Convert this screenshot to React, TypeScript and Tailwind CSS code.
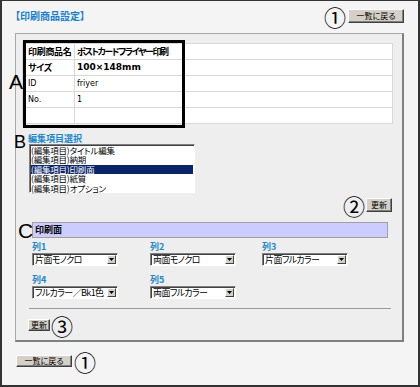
import React from "react";

const JP = "font-['Noto_Sans_CJK_JP',sans-serif] [font-feature-settings:'palt']";

function Btn({ label, className }: { label: string; className: string }) {
  return (
    <div
      className={`flex items-center justify-center bg-[#d4d0c8] border border-t-white border-l-white border-r-[#404040] border-b-[#404040] shadow-[inset_-1px_-1px_0_#808080] text-[8px] leading-none text-black whitespace-nowrap ${className}`}
    >
      {label}
    </div>
  );
}

function Circ({ n }: { n: string }) {
  return (
    <span className="inline-flex items-center h-[12px] text-[22px] leading-none text-black font-['Noto_Sans_CJK_JP',sans-serif]">
      {n}
    </span>
  );
}

function Sel({ text }: { text: string }) {
  return (
    <div className="flex items-center w-[86px] h-[13px] bg-white border border-t-[#808080] border-l-[#808080] border-r-white border-b-white shadow-[inset_1px_1px_0_#404040]">
      <span className="flex-1 min-w-0 pl-[2px] text-[9px] leading-[11px] tracking-[-0.6px] whitespace-nowrap text-black">{text}</span>
      <div className="w-[9px] h-[9px] mr-[1px] shrink-0 bg-[#d4d0c8] border border-t-white border-l-white border-r-[#404040] border-b-[#404040] flex items-center justify-center">
        <svg width="5" height="3" viewBox="0 0 5 3">
          <path d="M0 0h5L2.5 3z" fill="#000" />
        </svg>
      </div>
    </div>
  );
}

function Field({ label, text }: { label: string; text: string }) {
  return (
    <div className="flex flex-col">
      <div className="h-[11px] leading-[11px] text-[9px] font-bold text-[#1a86cc]">{label}</div>
      <div className="mt-[1px]">
        <Sel text={text} />
      </div>
    </div>
  );
}

const rows: { k: string; v: string; kb?: boolean; vb?: boolean; latin?: boolean; num?: boolean }[] = [
  { k: "印刷商品名", v: "ポストカードフライヤー印刷", kb: true, vb: true },
  { k: "サイズ", v: "100×148mm", kb: true, num: true },
  { k: "ID", v: "friyer", latin: true },
  { k: "No.", v: "1", latin: true },
  { k: "", v: "" },
];

export default function App() {
  return (
    <div
      className={`relative w-[420px] h-[387px] overflow-hidden bg-[#f4f4f4] border-[#333333] border-t border-l-2 border-r-2 border-b-2 ${JP}`}
    >
      {/* header */}
      <div className="h-[22px] flex items-center justify-between pt-[8px] pl-[13px] pr-[14px]">
        <div className="h-[14px] leading-[14px] text-[10px] font-bold text-[#1a7fcf]">【印刷商品設定】</div>
        <div className="flex items-center gap-[2px]">
          <Circ n="①" />
          <Btn label="一覧に戻る" className="w-[56px] h-[14px]" />
        </div>
      </div>

      {/* panel */}
      <div className="mt-[10px] ml-[13px] w-[389px] h-[309px] flex flex-col bg-[#eeeeee] border-t border-l border-[#a8a8a8] border-r-2 border-b-2 border-r-[#808080] border-b-[#808080]">
        {/* info table */}
        <div className="relative mt-[9px] ml-[6px] mr-[9px]">
          <div className="flex flex-col gap-[1px] bg-[#d8d8d8] border border-[#d8d8d8]">
            {rows.map((r, i) => (
              <div key={i} className="grid grid-cols-[51px_1fr] gap-[1px]">
                <div
                  className={`h-[15px] bg-white pl-[5px] flex items-center whitespace-nowrap text-black ${
                    r.latin ? "font-['DejaVu_Sans',sans-serif] text-[8px]" : "text-[9px] tracking-[-0.3px]"
                  } ${r.kb ? "font-bold" : ""}`}
                >
                  {r.k}
                </div>
                <div
                  className={`h-[15px] bg-white pl-[2px] flex items-center whitespace-nowrap text-black ${
                    r.latin
                      ? "font-['DejaVu_Sans',sans-serif] text-[8px]"
                      : r.num
                      ? "font-['DejaVu_Sans',sans-serif] text-[9px] font-bold"
                      : "text-[9px] tracking-[-1.4px]"
                  } ${r.vb ? "font-bold" : ""}`}
                >
                  {r.v}
                </div>
              </div>
            ))}
          </div>
          <div className="absolute left-[1px] top-[-3px] w-[162px] h-[88px] border-[3px] border-black" />
        </div>

        {/* B: list */}
        <div className="mt-[9px] ml-[12px] h-[11px] leading-[11px] text-[9px] font-bold text-[#1a86cc]">編集項目選択</div>
        <div className="ml-[13px] w-[166px] h-[49px] bg-white border border-t-[#808080] border-l-[#808080] border-r-white border-b-white shadow-[inset_1px_1px_0_#404040] p-[1px] flex flex-col">
          {["(編集項目)タイトル編集", "(編集項目)納期", "(編集項目)印刷面", "(編集項目)紙質", "(編集項目)オプション"].map(
            (t, i) => (
              <div
                key={i}
                className={`h-[9.4px] leading-[9.4px] text-[8.5px] tracking-[-0.2px] whitespace-nowrap ${
                  i === 2 ? "bg-[#0a246a] text-white" : "text-black"
                }`}
              >
                {t}
              </div>
            )
          )}
        </div>

        <div className="mt-[5px] mr-[10px] h-[14px] flex items-center justify-end gap-[1px]">
          <Circ n="②" />
          <Btn label="更新" className="w-[26px] h-[14px]" />
        </div>

        {/* C: bar */}
        <div className="mt-[10px] ml-[16px] mr-[14px] h-[16px] bg-[#ccccff] border border-[#a0a0a0] flex items-center pl-[2px] text-[9px] font-bold text-black">
          印刷面
        </div>

        <div className="ml-[16px] mt-[3px] grid grid-cols-[118px_112px_auto] gap-y-[8px]">
          <Field label="列1" text="片面モノクロ" />
          <Field label="列2" text="両面モノクロ" />
          <Field label="列3" text="片面フルカラー" />
          <Field label="列4" text="フルカラー／Bk1色" />
          <Field label="列5" text="両面フルカラー" />
        </div>

        <div className="mt-[9px] ml-[13px] mr-[11px] h-[1px] bg-[#9a9a9a]" />

        <div className="mt-[10px] ml-[12px] h-[12px] flex items-center gap-[1px]">
          <Btn label="更新" className="w-[22px] h-[12px]" />
          <Circ n="③" />
        </div>
      </div>

      {/* bottom */}
      <div className="mt-[13px] ml-[14px] h-[12px] flex items-center gap-[2px]">
        <Btn label="一覧に戻る" className="w-[56px] h-[12px]" />
        <Circ n="①" />
      </div>

      {/* annotation letters */}
      <div className="absolute left-[7px] top-[70px] text-[21px] leading-none font-['Liberation_Sans',sans-serif] text-black">A</div>
      <div className="absolute left-[12px] top-[132px] text-[18px] leading-none font-['Liberation_Sans',sans-serif] text-black">B</div>
      <div className="absolute left-[16px] top-[219px] text-[21px] leading-none font-['Liberation_Sans',sans-serif] text-black">C</div>
    </div>
  );
}
